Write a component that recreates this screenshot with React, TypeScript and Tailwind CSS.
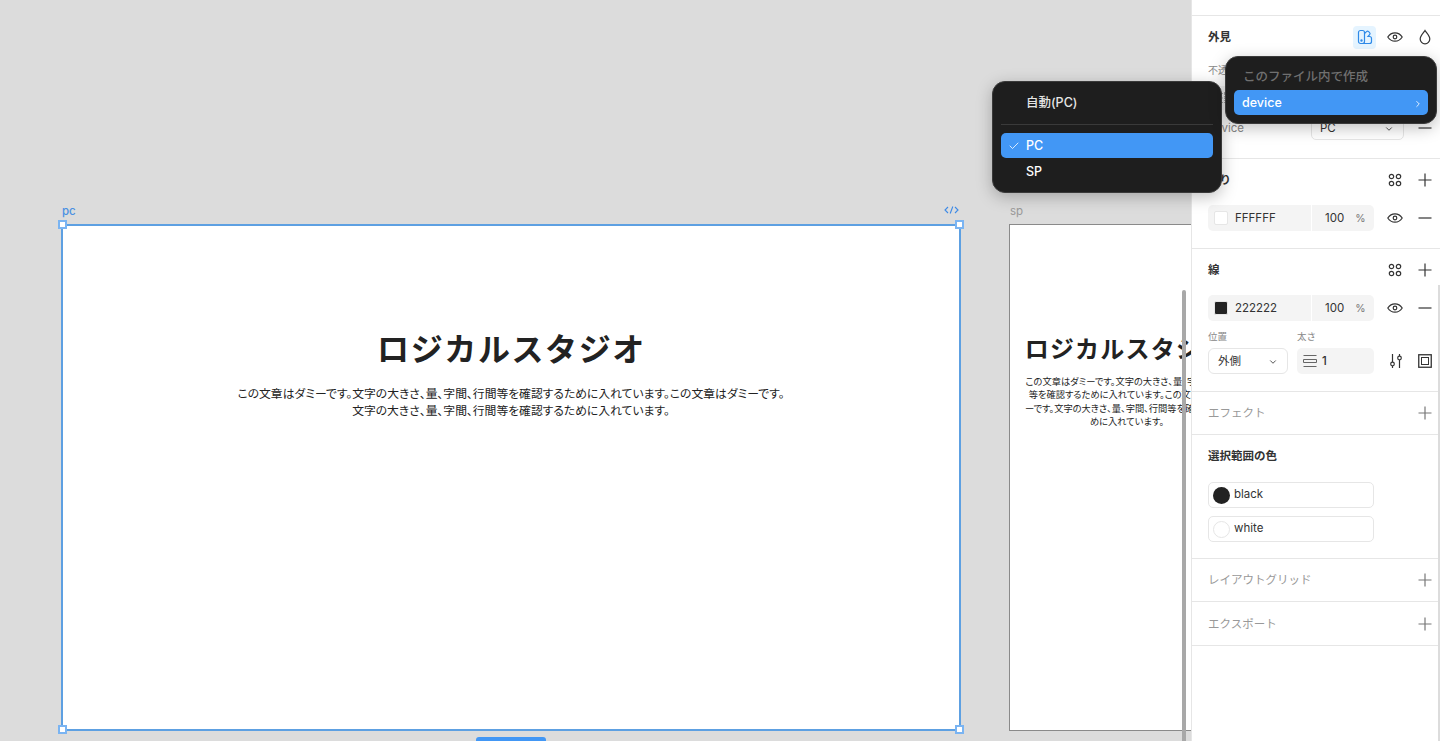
import { Check, ChevronDown, ChevronRight } from "lucide-react";

const jp = "[font-family:Inter,'Noto_Sans_CJK_JP',sans-serif]";

function Styles() {
    return (
        <svg width="16" height="16" viewBox="0 0 16 16" fill="none" stroke="#333" strokeWidth="1.2">
            <circle cx="4.5" cy="4.5" r="2.2" />
            <circle cx="11.5" cy="4.5" r="2.2" />
            <circle cx="4.5" cy="11.5" r="2.2" />
            <circle cx="11.5" cy="11.5" r="2.2" />
        </svg>
    );
}

function Drop() {
    return (
        <svg width="16" height="16" viewBox="0 0 16 16" fill="none" stroke="#333" strokeWidth="1.2">
            <path d="M8 1.5C6.6 3.8 3.2 6.6 3.2 10a4.8 4.8 0 0 0 9.6 0C12.8 6.6 9.4 3.8 8 1.5Z" />
        </svg>
    );
}

function Library() {
    return (
        <svg width="16" height="16" viewBox="0 0 16 16" fill="none" stroke="#2f8ae8" strokeWidth="1.2">
            <rect x="1.5" y="1.5" width="6" height="13" rx="2" />
            <path d="M7.5 4.5 9.5 2.6a1.5 1.5 0 0 1 2.1 0l1 1a1.5 1.5 0 0 1 0 2.1L11 7.5h1.5a2 2 0 0 1 2 2v3a2 2 0 0 1-2 2H5" />
            <circle cx="4.5" cy="11.5" r="0.6" fill="#2f8ae8" />
        </svg>
    );
}

function PlusIcon({ stroke = "#333" }: { stroke?: string }) {
    return (
        <svg width="16" height="16" viewBox="0 0 16 16" fill="none" stroke={stroke} strokeWidth="1.2">
            <path d="M8 1.5v13M1.5 8h13" />
        </svg>
    );
}

function MinusIcon() {
    return (
        <svg width="16" height="16" viewBox="0 0 16 16" fill="none" stroke="#333" strokeWidth="1.2">
            <path d="M1.5 8h13" />
        </svg>
    );
}

function EyeIcon() {
    return (
        <svg width="16" height="16" viewBox="0 0 16 16" fill="none" stroke="#333" strokeWidth="1.2">
            <path d="M0.8 8C2.6 5.2 5 3.8 8 3.8s5.4 1.4 7.2 4.2c-1.8 2.8-4.2 4.2-7.2 4.2S2.6 10.8 0.8 8Z" />
            <circle cx="8" cy="8" r="1.8" />
        </svg>
    );
}

function ColorRow({ swatch, value }: { swatch: string; value: string }) {
    return (
        <div className="flex h-[26px] items-center justify-between pl-[16px] pr-[7px]">
            <div className="flex h-[26px] w-[166px] items-center rounded-[5px] bg-[#f4f4f4]">
                <div className={`ml-[6px] h-[14px] w-[14px] rounded-[2px] border border-[#e6e6e6] ${swatch}`} />
                <span className="ml-[7px] mt-[2px] w-[76px] text-[11.5px] text-[#333]">{value}</span>
                <div className="h-[26px] w-px bg-white" />
                <span className="ml-[13px] mt-[2px] text-[11.5px] text-[#333]">100</span>
                <span className="ml-[11px] mt-[2px] text-[10.5px] text-[#777]">%</span>
            </div>
            <div className="flex w-[46px] items-center justify-between">
                <EyeIcon />
                <MinusIcon />
            </div>
        </div>
    );
}

function SectionHead({ title }: { title: string }) {
    return (
        <div className="flex h-[22px] items-center justify-between pl-[16px] pr-[7px]">
            <span className="mt-[2px] text-[11.5px] font-bold text-[#333]">{title}</span>
            <div className="flex w-[46px] items-center justify-between">
                <Styles />
                <PlusIcon />
            </div>
        </div>
    );
}

function CollapsedSection({ title, height }: { title: string; height: string }) {
    return (
        <div className={`flex items-center justify-between border-b border-[#e6e6e6] pl-[16px] pr-[7px] ${height}`}>
            <span className="mt-[2px] text-[11.5px] text-[#999]">{title}</span>
            <PlusIcon stroke="#777" />
        </div>
    );
}

function Handle({ pos }: { pos: string }) {
    return <div className={`absolute h-[9px] w-[9px] border-2 border-[#7ab4f2] bg-white ${pos}`} />;
}

export default function App() {
    return (
        <div className={`flex h-[741px] w-[1440px] overflow-hidden bg-[#dcdcdc] ${jp} antialiased`}>
            <div className="relative w-[1191px] shrink-0 overflow-hidden">
                <span className="absolute left-[62px] top-[203px] text-[11.5px] font-medium text-[#4a90e2]">pc</span>
                <svg className="absolute left-[943px] top-[204px]" width="17" height="12" viewBox="0 0 17 12" fill="none" stroke="#3d8ae6" strokeWidth="1.1">
                    <path d="M5 3 2 6l3 3M12 3l3 3-3 3M9.8 2.5 7.2 9.5" />
                </svg>
                <div className="absolute left-[61px] top-[224px] h-[507px] w-[900px]">
                    <div className="flex h-full w-full flex-col items-center border-2 border-[#5da0e2] bg-white">
                        <h1 className="mt-[100px] pl-[1px] text-[32px] font-bold leading-[48px] tracking-[0.05em] text-[#222]">ロジカルスタジオ</h1>
                        <p className="mt-[12px] text-center text-[11.8px] leading-[17px] text-[#222] [font-feature-settings:'palt']">
                            この文章はダミーです。文字の大きさ、量、字間、行間等を確認するために入れています。この文章はダミーです。
                            <br />
                            文字の大きさ、量、字間、行間等を確認するために入れています。
                        </p>
                    </div>
                    <Handle pos="-left-[3px] -top-[4px]" />
                    <Handle pos="-right-[3px] -top-[4px]" />
                    <Handle pos="-left-[3px] -bottom-[3px]" />
                    <Handle pos="-right-[3px] -bottom-[3px]" />
                </div>
                <div className="absolute bottom-0 left-[476px] h-[4px] w-[70px] rounded-t-[3px] bg-[#4297f5]" />

                <span className="absolute left-[1010px] top-[203px] text-[11.5px] text-[#999]">sp</span>
                <div className="absolute left-[1009px] top-[224px] h-[507px] w-[236px]">
                    <div className="flex h-full w-full flex-col items-center border border-[#8a8a8a] bg-white">
                        <h2 className="mt-[102px] whitespace-nowrap pr-[3px] text-[24px] font-bold leading-[46px] tracking-[0.05em] text-[#222]">ロジカルスタジオ</h2>
                        <p className="mt-[2px] w-[205px] text-center text-[9.25px] leading-[13.4px] text-[#222] [font-feature-settings:'palt']">
                            この文章はダミーです。文字の大きさ、量、字間、行間等を確認するために入れています。この文章はダミーです。文字の大きさ、量、字間、行間等を確認するために入れています。
                        </p>
                    </div>
                </div>
                <div className="absolute bottom-0 right-[5px] top-[290px] w-[4px] rounded-t-full bg-[#a8a8a8]" />
            </div>

            <aside className="relative flex h-full w-[249px] shrink-0 flex-col border-l border-[#e6e6e6] bg-white">
                <div className="h-[16px] border-b border-[#e6e6e6]" />

                <div className="h-[143px] border-b border-[#e6e6e6]">
                    <div className="flex h-[42px] items-center pl-[16px] pr-[7px]">
                        <span className="mt-[2px] text-[11.5px] font-bold text-[#333]">外見</span>
                        <div className="ml-auto flex h-[23px] w-[23px] items-center justify-center rounded-[4px] bg-[#e5f4ff]"><Library /></div>
                        <span className="ml-[11px]"><EyeIcon /></span>
                        <span className="ml-[14px]"><Drop /></span>
                    </div>
                    <div className="pl-[16px] pt-[5px] text-[10px] text-[#888]">不透明度</div>
                    <div className="ml-[16px] mt-[8px] flex h-[24px] w-[80px] items-center rounded-[5px] bg-[#f4f4f4] pl-[6px]">
                        <svg width="12" height="12" viewBox="0 0 12 12" fill="none" stroke="#aaa" strokeWidth="1" strokeDasharray="1 1">
                            <path d="M0 1.5h12M0 6h12M0 10.5h12M1.5 0v12M6 0v12M10.5 0v12" />
                        </svg>
                    </div>
                    <div className="mt-[6px] flex h-[24px] items-center pl-[16px] pr-[7px]">
                        <span className="mt-[2px] text-[11.5px] text-[#888]">device</span>
                        <div className="ml-auto mr-[13px] flex h-[24px] w-[93px] items-center justify-between rounded-[5px] border border-[#e6e6e6] pl-[8px] pr-[9px] pt-[2px] text-[11.5px] text-[#333]">
                            PC
                            <ChevronDown size={10} strokeWidth={2} />
                        </div>
                        <MinusIcon />
                    </div>
                </div>

                <div className="h-[90px] border-b border-[#e6e6e6] pt-[10px]">
                    <SectionHead title="塗り" />
                    <div className="mt-[14px]"><ColorRow swatch="bg-white" value="FFFFFF" /></div>
                </div>

                <div className="h-[143px] border-b border-[#e6e6e6] pt-[10px]">
                    <SectionHead title="線" />
                    <div className="mt-[14px]"><ColorRow swatch="bg-[#222222]" value="222222" /></div>
                    <div className="mt-[9px] flex pl-[16px] text-[9.5px] leading-[14px] text-[#888]">
                        <span className="w-[89px]">位置</span>
                        <span>太さ</span>
                    </div>
                    <div className="mt-[4px] flex h-[26px] items-center pl-[16px]">
                        <div className="flex h-[26px] w-[80px] items-center justify-between rounded-[6px] border border-[#e6e6e6] pl-[9px] pr-[9px] pt-[2px] text-[11.5px] text-[#333]">
                            外側
                            <ChevronDown size={10} strokeWidth={2} />
                        </div>
                        <div className="ml-[9px] flex h-[26px] w-[77px] items-center rounded-[5px] bg-[#f4f4f4] pl-[6px] text-[11.5px] font-medium text-[#333]">
                            <svg width="14" height="14" viewBox="0 0 14 14" fill="none" stroke="#666" strokeWidth="1">
                                <path d="M0.5 1.5h13M0.5 5.5h13v3h-13zM0.5 12.5h13" />
                            </svg>
                            <span className="ml-[5px] mt-[2px]">1</span>
                        </div>
                        <svg className="ml-[14px]" width="16" height="16" viewBox="0 0 16 16" fill="none" stroke="#333" strokeWidth="1.2">
                            <path d="M4.5 1v8M4.5 13v2M11.5 1v2M11.5 7v8" />
                            <circle cx="4.5" cy="11" r="1.8" />
                            <circle cx="11.5" cy="5" r="1.8" />
                        </svg>
                        <svg className="ml-[14px]" width="14" height="14" viewBox="0 0 14 14" fill="none" stroke="#333">
                            <rect x="0.75" y="0.75" width="12.5" height="12.5" strokeWidth="1.3" />
                            <rect x="3.5" y="3.5" width="7" height="7" strokeWidth="1" />
                        </svg>
                    </div>
                </div>

                <CollapsedSection title="エフェクト" height="h-[43px]" />

                <div className="h-[124px] border-b border-[#e6e6e6] pl-[16px]">
                    <div className="pt-[14px] text-[11.5px] font-bold leading-[15px] text-[#333]">選択範囲の色</div>
                    <div className="mt-[18px] flex flex-col gap-[8px]">
                        <div className="flex h-[26px] w-[166px] items-center rounded-[5px] border border-[#e6e6e6] pl-[4px] text-[11.5px] text-[#333]">
                            <div className="h-[17px] w-[17px] rounded-full bg-[#222]" />
                            <span className="ml-[4px]">black</span>
                        </div>
                        <div className="flex h-[26px] w-[166px] items-center rounded-[5px] border border-[#e6e6e6] pl-[4px] text-[11.5px] text-[#333]">
                            <div className="h-[17px] w-[17px] rounded-full border border-[#e6e6e6] bg-white" />
                            <span className="ml-[4px]">white</span>
                        </div>
                    </div>
                </div>

                <CollapsedSection title="レイアウトグリッド" height="h-[43px]" />
                <CollapsedSection title="エクスポート" height="h-[44px]" />

                <div className="absolute bottom-0 right-0 top-[285px] w-[2px] bg-[#dcdcdc]" />
            </aside>

            <div className="absolute left-[992px] top-[81px] w-[230px] rounded-[13px] border border-[#3a3a3a] bg-[#1e1e1e] p-[8px] text-[12.5px] font-medium text-white shadow-[0_4px_16px_rgba(0,0,0,0.25)]">
                <div className="flex h-[26px] items-center pl-[25px] text-[#e6e6e6]">自動(PC)</div>
                <div className="my-[8px] h-px bg-[#3a3a3a]" />
                <div className="flex h-[25px] items-center rounded-[5px] bg-[#4297f5]">
                    <Check size={12} strokeWidth={1.6} className="ml-[7px]" />
                    <span className="ml-[6px] mt-[2px]">PC</span>
                </div>
                <div className="flex h-[26px] items-center pl-[25px] pt-[2px]">SP</div>
            </div>

            <div className="absolute left-[1225px] top-[56px] w-[212px] rounded-[13px] border border-[#3a3a3a] bg-[#1e1e1e] px-[8px] pb-[8px] pt-[9px] text-[12.5px] font-medium shadow-[0_4px_16px_rgba(0,0,0,0.25)]">
                <div className="mb-[1px] flex h-[23px] items-center pl-[9px] text-[#707070]">このファイル内で作成</div>
                <div className="flex h-[25px] items-center justify-between rounded-[5px] bg-[#4297f5] pl-[8px] pr-[5px] pt-[2px] text-white">
                    device
                    <ChevronRight size={10} strokeWidth={2} />
                </div>
            </div>
        </div>
    );
}
